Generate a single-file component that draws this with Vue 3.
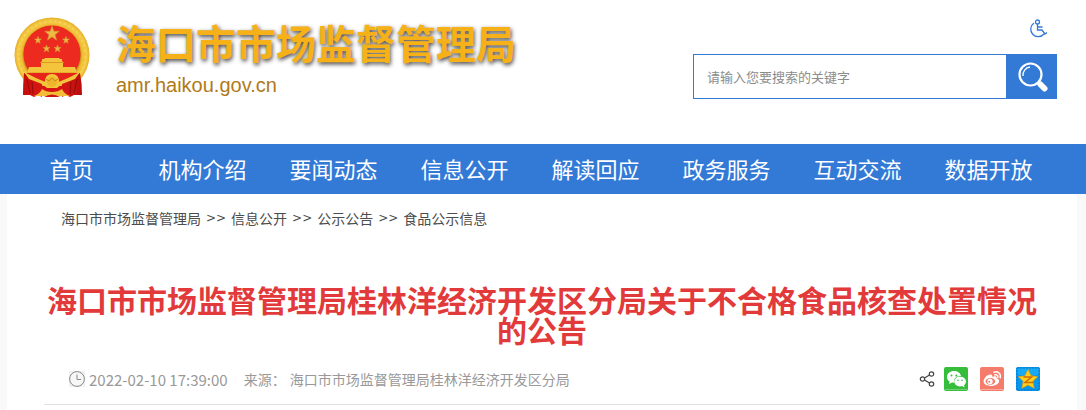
<script setup>
import { ref } from 'vue'

const keyword = ref('')
const navItems = ['首页', '机构介绍', '要闻动态', '信息公开', '解读回应', '政务服务', '互动交流', '数据开放']
const crumbs = ['海口市市场监督管理局', '信息公开', '公示公告', '食品公示信息']
</script>

<template>
  <div class="page">
    <header class="header">
      <a class="brand" href="#">
        <svg class="emblem" viewBox="0 0 76 82" aria-hidden="true">
          <defs>
            <radialGradient id="gold" cx="50%" cy="50%" r="50%">
              <stop offset="74%" stop-color="#b67a13" />
              <stop offset="80%" stop-color="#edb92c" />
              <stop offset="90%" stop-color="#f9d355" />
              <stop offset="100%" stop-color="#e5ad22" />
            </radialGradient>
            <linearGradient id="drape" x1="0" x2="1" y1="0" y2="0">
              <stop offset="0" stop-color="#c20d0c" />
              <stop offset=".5" stop-color="#e9201b" />
              <stop offset="1" stop-color="#b90c0b" />
            </linearGradient>
          </defs>
          <circle cx="38" cy="39" r="37.5" fill="url(#gold)" />
          <circle cx="38" cy="38" r="33" fill="none" stroke="#e2ac25" stroke-width="2" stroke-dasharray="2 3" opacity=".35" />
          <circle cx="38" cy="38" r="28.5" fill="#ec2a20" />
          <g fill="#edbb43" stroke="#d99a35" stroke-width=".7">
            <path d="M38 10l1.800 5.300h5.400l-4.300 3.400 1.600 5.300-4.500-3.200-4.500 3.200 1.600-5.300-4.300-3.400h5.400z" />
            <path d="M24 20.500l.8 2.500h2.600l-2 1.600.7 2.600-2.100-1.500-2.100 1.500.7-2.600-2-1.600h2.600z" />
            <path d="M52 20.500l.8 2.500h2.600l-2 1.600.7 2.600-2.100-1.500-2.100 1.500.7-2.600-2-1.600h2.600z" />
            <path d="M32.500 29l.8 2.500h2.600l-2 1.600.7 2.600-2.100-1.500-2.100 1.500.7-2.600-2-1.600h2.600z" />
            <path d="M43.500 29l.8 2.500h2.600l-2 1.600.7 2.600-2.100-1.500-2.100 1.500.7-2.600-2-1.600h2.600z" />
          </g>
          <path d="M15 51h12v-4h-1l2-2v-2h2l1-1h14l1 1h2v2l2 2h-1v4h12l2 6H13z" fill="#f4c53c" />
          <path d="M27 46.500h22M13 57h50" stroke="#d78d1a" stroke-width=".8" />
          <path d="M12 57h52l-6 7H18z" fill="#e7241c" />
          <path d="M10 57q-1 10-1 22h7l4 2 4-2 4 2V66zM66 57q2 10 2 22h-8l-4 2-4-2-4 2V66z" fill="url(#drape)" />
          <path d="M13 63l3 14M18 66l1 12M63 63l-3 14M57 66l-1 12" stroke="#960b0b" stroke-width="1" />
          <path d="M22 67l7 3h18l7-3-4 12H26z" fill="#d51513" />
          <path d="M10 56l12 6 9 4q0-8 7-8t7 8l9-4 12-6-5 7-13 5-5 4H33l-5-4-13-5z" fill="#f4c53c" />
          <circle cx="38" cy="66" r="5" fill="#edb42c" />
          <path d="M32 63l3 2 3-3 3 3 3-2" fill="none" stroke="#c98a14" stroke-width="1" />
          <path d="M20 80q6-2 8-7 4 3 10 3t10-3q2 5 8 7z" fill="#f3bd35" />
          <path d="M30 81q8-5 16 0z" fill="#cc1511" />
        </svg>
        <span class="brand-text">
          <span class="site-name">海口市市场监督管理局</span>
          <span class="site-url">amr.haikou.gov.cn</span>
        </span>
      </a>
      <div class="tools">
        <a class="access" href="#" aria-label="无障碍">
          <svg viewBox="0 0 20 20" fill="none" stroke="#337ad7" stroke-width="1.300">
            <circle cx="9.500" cy="3" r="2" />
            <path d="M9.500 5v6h4.500l3 4 2-1.500M9.500 8h5M6 4a7.500 7.500 0 1 0 10 11" />
          </svg>
        </a>
        <form class="search" role="search" @submit.prevent>
          <input v-model="keyword" class="search-input" type="text" aria-label="搜索" placeholder="请输入您要搜索的关键字" />
          <button class="search-button" type="submit" aria-label="搜索">
            <svg viewBox="0 0 30 30" fill="none" stroke="#fff">
              <circle cx="12.500" cy="12.500" r="11" stroke-width="2.200" />
              <path d="M5 14a8 8 0 0 1 7-9" stroke-width="1.300" />
              <path d="M19.500 20.500l3 3" stroke-width="3" />
              <path d="M22.500 22.500l4 4" stroke-width="6" stroke-linecap="round" />
            </svg>
          </button>
        </form>
      </div>
    </header>

    <nav class="nav">
      <a v-for="item in navItems" :key="item" href="#">{{ item }}</a>
    </nav>

    <main class="content">
      <div class="crumbs">
        <template v-for="(crumb, i) in crumbs" :key="crumb">
          <span v-if="i" class="sep">&gt;&gt;</span>
          <a href="#">{{ crumb }}</a>
        </template>
      </div>
      <article class="article">
        <h1>海口市市场监督管理局桂林洋经济开发区分局关于不合格食品核查处置情况的公告</h1>
        <div class="meta">
          <svg class="clock" viewBox="0 0 16 16" fill="none" stroke="#888">
            <path d="M0 0h16v16H0z" fill="#f1f1f1" stroke="none" />
            <circle cx="8" cy="8" r="7.400" fill="#f7f7f7" />
            <path d="M8 3.500v5h4" />
          </svg>
          <time>2022-02-10 17:39:00</time>
          <span class="label">来源：</span>
          <span>海口市市场监督管理局桂林洋经济开发区分局</span>
          <div class="share">
            <svg class="share-mark" viewBox="0 0 16 16" fill="none" stroke="#444" stroke-width="1.200">
              <circle cx="3.500" cy="8" r="2.200" />
              <circle cx="12.500" cy="3" r="2.200" />
              <circle cx="12.500" cy="13" r="2.200" />
              <path d="M5.500 7l5-3M5.500 9l5 3" />
            </svg>
            <a href="#" aria-label="微信">
              <svg viewBox="0 0 24 24">
                <rect width="24" height="24" rx="2" fill="#36bd3c" />
                <path d="M1 22.500h22" stroke="#73d276" />
                <path d="M10 4c-4 0-7 2.500-7 6 0 2 1 3.500 2.700 4.500L5 17l3-1.500 2.500.3C9 12 12 8.800 17 9c-.6-3-3.400-5-7-5z" fill="#fff" />
                <path d="M16 9.700c-3.300 0-5.700 2.100-5.700 4.800s2.400 4.900 5.700 4.900l2-.3 2.600 1.300-.6-2.200c1.300-.9 2-2.200 2-3.700 0-2.700-2.600-4.800-6-4.800z" fill="#fff" />
                <g fill="#36bd3c"><circle cx="7.500" cy="8.500" r="1" /><circle cx="12.300" cy="8.500" r="1" /><circle cx="14" cy="13.300" r=".8" /><circle cx="18" cy="13.300" r=".8" /></g>
              </svg>
            </a>
            <a href="#" aria-label="微博">
              <svg viewBox="0 0 24 24">
                <rect width="24" height="24" rx="2" fill="#f57b6b" />
                <path d="M1 22.500h22" stroke="#faa99e" />
                <path d="M10.500 7.500c1-.3 2 .3 1.700 2.200 2.500-1 5-.8 4.400 1.500 5 1.500 2.400 7.800-6 7.800-4 0-7-1.800-7-4.700 0-3.200 4.300-7.300 6.900-6.800z" fill="#fff" />
                <ellipse cx="10.400" cy="14.300" rx="4.800" ry="3.400" fill="#f57b6b" />
                <circle cx="10" cy="14.500" r="2.700" fill="#fff" />
                <circle cx="9.300" cy="14.800" r="1" fill="#f57b6b" />
                <path d="M14 5.200c4-1.300 7.200 1.500 6.200 5.500M14.800 7.800c2-.5 3.500.7 3 2.600" fill="none" stroke="#fff" stroke-width="1.500" stroke-linecap="round" />
              </svg>
            </a>
            <a href="#" aria-label="QQ空间">
              <svg viewBox="0 0 24 24">
                <rect width="24" height="24" rx="2" fill="#0897ee" />
                <path d="M1 1h22v7H1z" fill="#16aaf6" />
                <rect x="1" y="1" width="22" height="22" fill="none" stroke="#0875c4" stroke-dasharray="2 1" />
                <path d="M12 2.500l3 6.300 6.800.8-5 4.700 1.400 7L12 18l-6.200 3.300 1.400-7-5-4.700L9 8.800z" fill="#ffd017" stroke="#e69b08" stroke-width=".7" />
                <path d="M7.500 10h8l-6.500 5.500h8" fill="none" stroke="#cf6b08" stroke-width="1.500" />
              </svg>
            </a>
          </div>
        </div>
      </article>
    </main>
  </div>
</template>

<style>
body {
  margin: 0;
  background: #f9f9f9;
}
</style>

<style scoped>
.page {
  font-family: "Noto Sans CJK SC", "Liberation Sans", sans-serif;
  font-size: 14px;
  color: #4c4c4c;
}
a {
  color: inherit;
  text-decoration: none;
}
svg {
  display: block;
}
.header {
  box-sizing: border-box;
  min-height: 144px;
  padding: 16px 29px 0 14px;
  display: flex;
  justify-content: space-between;
  background: #fff;
}
.brand {
  display: flex;
  align-items: flex-start;
  gap: 26px;
}
.emblem {
  width: 76px;
  height: 82px;
}
.brand-text {
  display: flex;
  flex-direction: column;
  gap: 4px;
}
.site-name {
  font-size: 40px;
  font-weight: 700;
  line-height: 52px;
  color: #f7b118;
  text-shadow: 1px 2px 4px #444;
}
.site-url {
  font-family: "Liberation Sans", sans-serif;
  font-size: 20px;
  line-height: 26px;
  color: #b07a17;
}
.tools {
  width: 364px;
  display: flex;
  flex-direction: column;
  gap: 14px;
  padding-top: 2px;
}
.access {
  align-self: flex-end;
  margin-right: 9px;
}
.access svg {
  width: 20px;
  height: 22px;
}
.search {
  display: flex;
  height: 45px;
}
.search-input {
  box-sizing: border-box;
  flex: 1;
  min-width: 0;
  padding: 0 13px;
  border: 1px solid #337ad7;
  border-right: 0;
  border-radius: 0;
  outline: 0;
  font: inherit;
  font-size: 13px;
  background: #fff;
}
.search-input::placeholder {
  color: #8c8c8c;
}
.search-button {
  width: 51px;
  padding: 0 0 0 2px;
  border: 0;
  display: flex;
  align-items: center;
  justify-content: center;
  background: #337ad7;
}
.search-button svg {
  width: 30px;
  height: 30px;
}
.nav {
  display: grid;
  grid-template-columns: repeat(8, 1fr);
  padding: 0 32px 2px 6px;
  background: #337ad7;
}
.nav a {
  font-size: 22px;
  line-height: 48px;
  text-align: center;
  white-space: nowrap;
  color: #fff;
}
.content {
  margin: 0 9px 0 7px;
  padding: 0 37px 5px;
  background: #fff;
}
.crumbs {
  display: flex;
  gap: 5px;
  padding-left: 17px;
  line-height: 48px;
}
.sep {
  font-family: "DejaVu Sans", sans-serif;
  font-size: 12px;
}
.article {
  padding-top: 42px;
}
h1 {
  margin: 0;
  font-size: 30px;
  line-height: 30px;
  font-weight: 700;
  text-align: center;
  color: #e23a3a;
}
.meta {
  display: flex;
  align-items: center;
  height: 50px;
  margin-top: 10px;
  padding-left: 25px;
  border-bottom: 1px solid #e2e2e2;
  color: #999;
}
.clock {
  width: 16px;
  height: 16px;
  margin-right: 4px;
}
.meta time {
  font-size: 15px;
}
.label {
  margin: 0 4px 0 16px;
}
.share {
  display: flex;
  align-items: center;
  gap: 12px;
  margin-left: auto;
}
.share-mark {
  width: 16px;
  height: 16px;
  margin-right: -3px;
}
.share a svg {
  width: 24px;
  height: 24px;
}
</style>
